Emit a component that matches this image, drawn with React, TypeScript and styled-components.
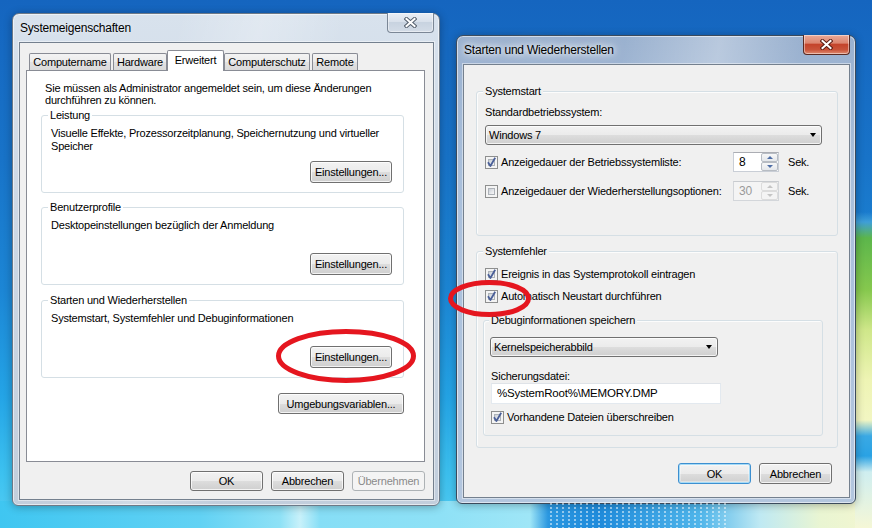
import React from "react";
import styled, { createGlobalStyle, css } from "styled-components";

const UI_FONT = `"Segoe UI", "Liberation Sans", Arial, sans-serif`;

const GlobalStyle = createGlobalStyle`
  *, *::before, *::after { box-sizing: border-box; }
  html, body { margin: 0; padding: 0; background: #1a72c6; }
  body {
    width: 872px; height: 528px; overflow: hidden;
    font-family: ${UI_FONT}; font-size: 11px; letter-spacing: -0.2px; color: #000;
  }
`;

const Desktop = styled.main`
  position: relative;
  width: 872px;
  height: 528px;
  overflow: hidden;
  background:
    linear-gradient(180deg, rgba(0,0,0,0) 0px, rgba(0,0,0,0) 212px, #3f9fd8 222px, #5cb64b 238px, #86c84e 290px, #cfe78a 330px, #eef4b4 380px, #f2f6c2 420px, #3aa9e4 436px, #2aa2e4 456px, #cfeef0 472px, #f5f7d6 528px) right top / 17px 100% no-repeat,
    linear-gradient(90deg, #3fc6f1 0px, #62d2f4 200px, #8ee1f6 280px, #c8f1fa 300px, #86def6 320px, #8ee1f6 440px, #9fe6f7 530px, #2a97e0 548px, #1f8bdb 600px, #4fb5ea 700px, #bfe9f3 760px, #e9f5d2 820px, #f3f6d0 872px) left bottom / 100% 27px no-repeat,
    linear-gradient(180deg, #1565bf 0%, #1873c8 30%, #1c86d5 55%, #24a4e6 75%, #3dc2f0 90%, #55cdf3 100%);

  &::after {
    content: "";
    position: absolute;
    left: 548px;
    top: 502px;
    width: 180px;
    height: 26px;
    background-image: radial-gradient(circle, rgba(255,255,255,0.5) 0.8px, rgba(255,255,255,0) 1.4px);
    background-size: 6px 4px;
  }
`;

const inactiveFrame = css`
  background:
    linear-gradient(105deg, rgba(255,255,255,0) 30%, rgba(255,255,255,0.25) 45%, rgba(255,255,255,0) 60%),
    linear-gradient(180deg, #d8e2ed 0%, #cdd8e5 40%, #c2cedc 100%);
`;

const activeFrame = css`
  background:
    linear-gradient(100deg, rgba(255,255,255,0) 35%, rgba(255,255,255,0.3) 55%, rgba(255,255,255,0) 72%),
    linear-gradient(180deg, #9ab1cf 0%, #a9bfdb 30%, #b3c6de 100%);
`;

const Window = styled.section<{ $active?: boolean; $left: number; $top: number; $width: number; $height: number }>`
  position: absolute;
  left: ${(p) => p.$left}px;
  top: ${(p) => p.$top}px;
  width: ${(p) => p.$width}px;
  height: ${(p) => p.$height}px;
  display: flex;
  flex-direction: column;
  padding: 0 5px 5px 6px;
  border: 1px solid ${(p) => (p.$active ? "#3b4a5c" : "#6d7987")};
  border-radius: 7px 7px 6px 6px;
  ${(p) => (p.$active ? activeFrame : inactiveFrame)};
  box-shadow: inset 0 0 0 1px rgba(255, 255, 255, 0.55), 0 1px 8px rgba(0, 0, 0, 0.3);
`;

const TitleBar = styled.header`
  flex: none;
  height: 28px;
  display: flex;
  align-items: flex-start;
  justify-content: space-between;
`;

const Caption = styled.h1<{ $active?: boolean }>`
  margin: 0;
  padding-left: 1px;
  font: normal 12px/28px ${UI_FONT};
  letter-spacing: -0.2px;
  color: #000;
  text-shadow: ${(p) =>
    p.$active
      ? "0 0 5px rgba(255,255,255,0.95), 0 0 10px rgba(255,255,255,0.9), 0 0 16px rgba(255,255,255,0.8)"
      : "0 0 6px rgba(255,255,255,0.6)"};
`;

const CloseButton = styled.button<{ $active?: boolean }>`
  width: 47px;
  height: 20px;
  margin-top: -1px;
  padding: 0;
  display: flex;
  align-items: center;
  justify-content: center;
  border: 1px solid ${(p) => (p.$active ? "#5a2a22" : "#7b8796")};
  border-top: none;
  border-radius: 0 0 4px 4px;
  background: ${(p) =>
    p.$active
      ? "linear-gradient(180deg, #e9a997 0%, #dc8670 42%, #c4442b 50%, #c9543a 78%, #df8c72 100%)"
      : "linear-gradient(180deg, #e9eef5 0%, #d9e1eb 45%, #c8d3e0 50%, #d3dce7 100%)"};
  box-shadow: inset 0 0 0 1px rgba(255, 255, 255, 0.45);
`;

const CloseGlyph: React.FC<{ active?: boolean }> = ({ active }) => (
  <svg width="13" height="11" viewBox="0 0 13 11">
    <path d="M2.5 2 L10.5 9 M10.5 2 L2.5 9" stroke={active ? "#5b1d14" : "#55606e"} strokeWidth="4" strokeLinecap="square" />
    <path d="M2.5 2 L10.5 9 M10.5 2 L2.5 9" stroke="#fff" strokeWidth="2" strokeLinecap="square" />
  </svg>
);

const Client = styled.div<{ $pad: string }>`
  flex: 1;
  display: flex;
  flex-direction: column;
  padding: ${(p) => p.$pad};
  background: #f0f0f0;
  border: 1px solid #74808e;
  box-shadow: 0 0 0 1px rgba(255, 255, 255, 0.45);
`;

const TabStrip = styled.nav`
  flex: none;
  height: 20px;
  display: flex;
  align-items: flex-end;
  gap: 2px;
  padding-left: 3px;
`;

const Tab = styled.div<{ $w: number; $selected?: boolean }>`
  width: ${(p) => p.$w}px;
  height: ${(p) => (p.$selected ? 21 : 17)}px;
  margin: ${(p) => (p.$selected ? "0 -2px -1px" : "0")};
  position: relative;
  z-index: ${(p) => (p.$selected ? 1 : 0)};
  display: flex;
  justify-content: center;
  padding-top: ${(p) => (p.$selected ? 2 : 1)}px;
  line-height: 14px;
  white-space: nowrap;
  border: 1px solid #898c95;
  border-bottom: none;
  border-radius: 2px 2px 0 0;
  background: ${(p) => (p.$selected ? "#fff" : "linear-gradient(180deg, #f3f3f3 0%, #ececec 50%, #e2e2e2 51%, #dadada 100%)")};
`;

const TabPanel = styled.div`
  height: 392px;
  flex: none;
  display: flex;
  flex-direction: column;
  padding: 11px 20px 0 14px;
  background: #fff;
  border: 1px solid #898c95;
`;

const Intro = styled.p`
  margin: 0 0 0 4px;
  line-height: 12px;
`;

const Group = styled.div<{ $h: number; $mt: number; $pad: string; $bg: string; $ml?: number }>`
  margin: ${(p) => p.$mt}px 0 0 ${(p) => p.$ml ?? 0}px;
  height: ${(p) => p.$h}px;
  flex: none;
  display: flex;
  flex-direction: column;
  padding: ${(p) => p.$pad};
  border: 1px solid #d5dfe5;
  border-radius: 3px;
  box-shadow: inset 1px 1px 0 rgba(255,255,255,0.8);
  --legend-bg: ${(p) => p.$bg};
`;

const Legend = styled.span`
  align-self: flex-start;
  margin: -8px 0 0 -2px;
  padding: 0 2px;
  line-height: 14px;
  background: var(--legend-bg);
`;

const GroupText = styled.p`
  margin: 5px 0 0 1px;
  line-height: 13px;
`;

const Label = styled.div<{ $mt: number }>`
  margin-top: ${(p) => p.$mt}px;
  line-height: 13px;
  white-space: nowrap;
`;

const Button = styled.button<{ $w: number; $h?: number; $default?: boolean }>`
  width: ${(p) => p.$w}px;
  height: ${(p) => p.$h ?? 21}px;
  flex: none;
  padding: 0;
  font: inherit;
  letter-spacing: inherit;
  color: #000;
  border: 1px solid ${(p) => (p.$default ? "#3c8fd0" : "#707070")};
  border-radius: 3px;
  background: linear-gradient(180deg, #f2f2f2 0%, #ebebeb 50%, #dddddd 51%, #cfcfcf 100%);
  box-shadow: ${(p) => (p.$default ? "inset 0 0 0 1px #a6dbf7, inset 0 0 0 2px rgba(255,255,255,0.35)" : "inset 0 0 0 1px rgba(255,255,255,0.75)")};

  &:disabled {
    color: #8a8a8a;
    border-color: #adb2b5;
    background: #f4f4f4;
    box-shadow: none;
  }
`;

const CornerButton = styled(Button)<{ $mt: number }>`
  align-self: flex-end;
  margin-top: ${(p) => p.$mt}px;
`;

const GroupAction = styled(Button)`
  align-self: flex-end;
  margin-top: auto;
`;

const DialogButtons = styled.div<{ $mt: number; $mr: number }>`
  display: flex;
  justify-content: flex-end;
  gap: 8px;
  margin-top: ${(p) => p.$mt}px;
  margin-right: ${(p) => p.$mr}px;
`;

const Combo = styled.div<{ $w?: number; $mt: number; $ml?: number }>`
  width: ${(p) => (p.$w ? `${p.$w}px` : "auto")};
  height: 20px;
  margin-top: ${(p) => p.$mt}px;
  margin-left: ${(p) => p.$ml ?? 0}px;
  flex: none;
  display: flex;
  align-items: center;
  justify-content: space-between;
  padding: 0 5px 0 3px;
  border: 1px solid #707070;
  border-radius: 3px;
  background: linear-gradient(180deg, #f2f2f2 0%, #ebebeb 50%, #dddddd 51%, #cfcfcf 100%);
  box-shadow: inset 0 0 0 1px rgba(255, 255, 255, 0.75);
`;

const ComboArrow = styled.span`
  width: 0;
  height: 0;
  border-left: 3.5px solid transparent;
  border-right: 3.5px solid transparent;
  border-top: 4px solid #000;
`;

const OptionRow = styled.div<{ $mt: number }>`
  margin-top: ${(p) => p.$mt}px;
  display: grid;
  grid-template-columns: 248px 46px auto;
  align-items: center;
`;

const CheckRow = styled.label<{ $mt: number }>`
  margin-top: ${(p) => p.$mt}px;
  display: flex;
  align-items: center;
  gap: 3px;
  height: 14px;
  line-height: 14px;
  white-space: nowrap;
`;

const CheckFrame = styled.span`
  position: relative;
  width: 13px;
  height: 13px;
  flex: none;
  padding: 2px;
  border: 1px solid #8e8f8f;
  background: #f4f4f4;
`;

const CheckInner = styled.span`
  display: block;
  width: 100%;
  height: 100%;
  border: 1px solid #aeb3b9;
  background: linear-gradient(135deg, #c9ced6 0%, #e7e9ec 60%, #f7f7f7 100%);
`;

const CheckMark = styled.svg`
  position: absolute;
  left: -1px;
  top: -1px;
`;

const CheckBox: React.FC<{ checked?: boolean }> = ({ checked }) => (
  <CheckFrame>
    <CheckInner />
    {checked && (
      <CheckMark width="13" height="13" viewBox="0 0 13 13">
        <path d="M3 6.2 L5.4 10 L10.2 1.8" fill="none" stroke="#4a5f98" strokeWidth="1.8" strokeLinejoin="round" />
      </CheckMark>
    )}
  </CheckFrame>
);

const Spinner = styled.div<{ $disabled?: boolean }>`
  width: 46px;
  height: 20px;
  display: flex;
  border: 1px solid ${(p) => (p.$disabled ? "#d3d6da" : "#c9ced6")};
  border-top-color: ${(p) => (p.$disabled ? "#c8cbcf" : "#abadb3")};
  background: ${(p) => (p.$disabled ? "#f4f4f4" : "#fff")};
`;

const SpinValue = styled.span<{ $disabled?: boolean }>`
  flex: 1;
  padding-left: 5px;
  line-height: 18px;
  font-size: 12px;
  color: ${(p) => (p.$disabled ? "#9a9a9a" : "#000")};
`;

const SpinButtons = styled.span`
  width: 17px;
  display: flex;
  flex-direction: column;
`;

const SpinBtn = styled.span<{ $disabled?: boolean }>`
  flex: 1;
  display: flex;
  align-items: center;
  justify-content: center;
  border: 1px solid ${(p) => (p.$disabled ? "#dcdcdc" : "#b7bcc3")};
  border-radius: 2px;
  background: ${(p) => (p.$disabled ? "#f4f4f4" : "linear-gradient(180deg, #f7f7f7, #e4e7eb)")};
`;

const SpinArrow = styled.span<{ $down?: boolean; $disabled?: boolean }>`
  width: 0;
  height: 0;
  border-left: 3px solid transparent;
  border-right: 3px solid transparent;
  ${(p) =>
    p.$down
      ? `border-top: 3px solid ${p.$disabled ? "#c5c5c5" : "#4f6ea6"};`
      : `border-bottom: 3px solid ${p.$disabled ? "#c5c5c5" : "#4f6ea6"};`}
`;

const Unit = styled.span`
  margin-left: 9px;
`;

const TextBox = styled.div<{ $w: number }>`
  width: ${(p) => p.$w}px;
  height: 21px;
  padding-left: 5px;
  line-height: 19px;
  font-size: 11.5px;
  background: #fff;
  border: 1px solid #e3e9ef;
  border-top-color: #dfe3e8;
`;

const Overlay = styled.svg`
  position: absolute;
  left: 0;
  top: 0;
  pointer-events: none;
  z-index: 10;
`;

const SpinBox: React.FC<{ value: string; disabled?: boolean }> = ({ value, disabled }) => (
  <Spinner $disabled={disabled}>
    <SpinValue $disabled={disabled}>{value}</SpinValue>
    <SpinButtons>
      <SpinBtn $disabled={disabled}>
        <SpinArrow $disabled={disabled} />
      </SpinBtn>
      <SpinBtn $disabled={disabled}>
        <SpinArrow $down $disabled={disabled} />
      </SpinBtn>
    </SpinButtons>
  </Spinner>
);

export default function App() {
  return (
    <>
      <GlobalStyle />
      <Desktop>
        <Window $left={12} $top={13} $width={428} $height={493}>
          <TitleBar>
            <Caption>Systemeigenschaften</Caption>
            <CloseButton aria-label="Schließen">
              <CloseGlyph />
            </CloseButton>
          </TitleBar>
          <Client $pad="7px 8px 8px 6px">
            <TabStrip>
              <Tab $w={82}>Computername</Tab>
              <Tab $w={54}>Hardware</Tab>
              <Tab $w={57} $selected>
                Erweitert
              </Tab>
              <Tab $w={86}>Computerschutz</Tab>
              <Tab $w={46}>Remote</Tab>
            </TabStrip>
            <TabPanel>
              <Intro>
                Sie müssen als Administrator angemeldet sein, um diese Änderungen
                <br />
                durchführen zu können.
              </Intro>
              <Group $h={78} $mt={9} $pad="0 11px 9px 8px" $bg="#fff">
                <Legend>Leistung</Legend>
                <GroupText>
                  Visuelle Effekte, Prozessorzeitplanung, Speichernutzung und virtueller
                  <br />
                  Speicher
                </GroupText>
                <GroupAction $w={82} $h={22}>Einstellungen...</GroupAction>
              </Group>
              <Group $h={78} $mt={14} $pad="0 11px 9px 8px" $bg="#fff">
                <Legend>Benutzerprofile</Legend>
                <GroupText>Desktopeinstellungen bezüglich der Anmeldung</GroupText>
                <GroupAction $w={82} $h={22}>Einstellungen...</GroupAction>
              </Group>
              <Group $h={78} $mt={15} $pad="0 11px 9px 8px" $bg="#fff">
                <Legend>Starten und Wiederherstellen</Legend>
                <GroupText>Systemstart, Systemfehler und Debuginformationen</GroupText>
                <GroupAction $w={82} $h={22}>Einstellungen...</GroupAction>
              </Group>
              <CornerButton $w={126} $mt={15}>
                Umgebungsvariablen...
              </CornerButton>
            </TabPanel>
            <DialogButtons $mt={9} $mr={0}>
              <Button $w={73} $h={20}>OK</Button>
              <Button $w={73} $h={20}>Abbrechen</Button>
              <Button $w={73} $h={20} disabled>
                Übernehmen
              </Button>
            </DialogButtons>
          </Client>
        </Window>

        <Window $active $left={456} $top={35} $width={400} $height={469}>
          <TitleBar>
            <Caption $active>Starten und Wiederherstellen</Caption>
            <CloseButton $active aria-label="Schließen">
              <CloseGlyph active />
            </CloseButton>
          </TitleBar>
          <Client $pad="26px 11px 0 12px">
            <Group $h={145} $mt={0} $pad="0 15px 0 8px" $bg="#f0f0f0">
              <Legend>Systemstart</Legend>
              <Label $mt={8}>Standardbetriebssystem:</Label>
              <Combo $mt={6}>
                <span>Windows 7</span>
                <ComboArrow />
              </Combo>
              <OptionRow $mt={7}>
                <CheckRow $mt={0}>
                  <CheckBox checked />
                  Anzeigedauer der Betriebssystemliste:
                </CheckRow>
                <SpinBox value="8" />
                <Unit>Sek.</Unit>
              </OptionRow>
              <OptionRow $mt={9}>
                <CheckRow $mt={0}>
                  <CheckBox />
                  Anzeigedauer der Wiederherstellungsoptionen:
                </CheckRow>
                <SpinBox value="30" disabled />
                <Unit>Sek.</Unit>
              </OptionRow>
            </Group>
            <Group $h={197} $mt={15} $pad="0 14px 0 8px" $bg="#f0f0f0">
              <Legend>Systemfehler</Legend>
              <CheckRow $mt={9}>
                <CheckBox checked />
                Ereignis in das Systemprotokoll eintragen
              </CheckRow>
              <CheckRow $mt={8}>
                <CheckBox checked />
                Automatisch Neustart durchführen
              </CheckRow>
              <Group $h={116} $mt={17} $ml={-2} $pad="0 7px 0 7px" $bg="#f0f0f0">
                <Legend>Debuginformationen speichern</Legend>
                <Combo $w={228} $mt={10} $ml={-1}>
                  <span>Kernelspeicherabbild</span>
                  <ComboArrow />
                </Combo>
                <Label $mt={13}>Sicherungsdatei:</Label>
                <TextBox $w={230}>%SystemRoot%\MEMORY.DMP</TextBox>
                <CheckRow $mt={6}>
                  <CheckBox checked />
                  Vorhandene Dateien überschreiben
                </CheckRow>
              </Group>
            </Group>
            <DialogButtons $mt={15} $mr={6}>
              <Button $w={73} $default>
                OK
              </Button>
              <Button $w={73}>Abbrechen</Button>
            </DialogButtons>
          </Client>
        </Window>

        <Overlay width="872" height="528" viewBox="0 0 872 528">
          <ellipse cx="346" cy="356" rx="67.5" ry="24.5" fill="none" stroke="#e5161f" strokeWidth="5" />
          <ellipse cx="489.5" cy="298.5" rx="39" ry="16" fill="none" stroke="#e5161f" strokeWidth="5" />
        </Overlay>
      </Desktop>
    </>
  );
}
